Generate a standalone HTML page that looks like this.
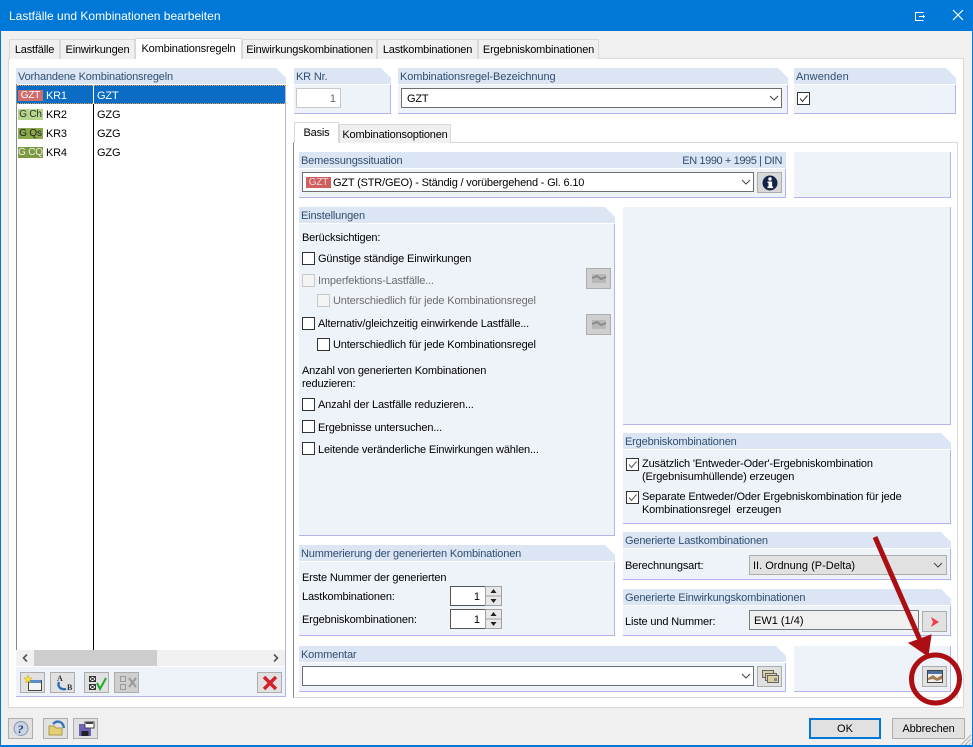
<!DOCTYPE html>
<html><head><meta charset="utf-8"><style>
*{box-sizing:border-box}
html,body{margin:0;padding:0;width:973px;height:747px;overflow:hidden;background:#f0f0f0;font-family:"Liberation Sans",sans-serif;font-size:11px;color:#000}
.a{position:absolute}
.t{position:absolute;white-space:nowrap;line-height:14px;height:14px;letter-spacing:-.15px;margin-top:1px}
.tab{position:absolute;background:#f0f0f0;border:1px solid #d9d9d9;border-bottom:none;text-align:center;white-space:nowrap;line-height:21px;letter-spacing:-.18px}
.tab.on{background:#fff;line-height:20px}
.p{position:absolute;background:#eef2f9;border-right:1px solid #b3b3ee;border-bottom:1px solid #b3b3ee}
.c{clip-path:polygon(0 0,calc(100% - 10px) 0,100% 10px,100% 100%,0 100%)}
.h{position:absolute;left:0;right:-1px;top:0;height:17px;background:#dbe5f4;border-bottom:1px solid #fff;color:#2f4f70;line-height:16px;padding:1px 0 0 2px;white-space:nowrap;letter-spacing:-.16px}
.in{position:absolute;background:#fff;border:1px solid #6e6e6e;line-height:20px;white-space:nowrap;padding-left:5px;letter-spacing:-.18px}
.btn{position:absolute;background:#e1e1e1;border:1px solid #adadad}
.dis{background:#cfcfcf}
.cb{position:absolute;width:13px;height:13px;background:#fff;border:1px solid #333}
.cb.d{border-color:#c8c8c8;background:#f4f4f4}
.gray{color:#6d6d6d}
.tag{position:absolute;height:11px;line-height:11px;text-align:center;white-space:nowrap;font-size:10px;letter-spacing:-.2px}
svg{position:absolute;overflow:visible}
</style></head><body>

<div class="a" style="left:0;top:0;width:973px;height:747px;border:1px solid #0078d7;border-bottom-width:2px"></div>
<div class="a" style="left:0;top:0;width:973px;height:31px;background:#0078d7"></div>
<div class="t" style="left:9px;top:8px;color:#fff;font-size:12px;letter-spacing:0">Lastfälle und Kombinationen bearbeiten</div>
<svg style="left:914px;top:9px" width="50" height="14" fill="none" stroke="#fff"><path d="M9.5 3.5H1.500V11.500H9.500M5 7.500H11M9.500 6V9"/><path d="M39 1L49 11M49 1L39 11" stroke-width="1.2"/></svg>

<!-- main tab panel -->
<div class="a" style="left:8px;top:58px;width:956px;height:650px;background:#fff;border:1px solid #d9d9d9"></div>
<div class="tab" style="left:9px;top:39px;width:51px;height:20px">Lastfälle</div>
<div class="tab" style="left:60px;top:39px;width:75px;height:20px">Einwirkungen</div>
<div class="tab on" style="left:135px;top:38px;width:107px;height:21px;z-index:2">Kombinationsregeln</div>
<div class="tab" style="left:242px;top:39px;width:135px;height:20px">Einwirkungskombinationen</div>
<div class="tab" style="left:377px;top:39px;width:101px;height:20px">Lastkombinationen</div>
<div class="tab" style="left:478px;top:39px;width:121px;height:20px">Ergebniskombinationen</div>

<!-- left list panel -->
<div class="p c" style="left:16px;top:68px;width:270px;height:629px">
  <div class="h">Vorhandene Kombinationsregeln</div>
</div>
<div class="a" style="left:16px;top:84px;width:269px;height:566px;background:#fff;border-left:1px solid #8a8a8a"></div>
<div class="a" style="left:17px;top:85px;width:268px;height:19px;background:#0a6cc4;border-top:1px dotted #e0a050;border-bottom:1px dotted #e0a050"></div>
<div class="a" style="left:93px;top:85px;width:1px;height:565px;background:#000"></div>
<div class="a" style="left:93px;top:85px;width:1px;height:19px;background:#fff"></div>
<div class="tag" style="left:18px;top:90px;width:25px;background:#cf6c6c;color:#fff">GZT</div>
<div class="tag" style="left:18px;top:109px;width:25px;background:#b5d48c;color:#333">G Ch</div>
<div class="tag" style="left:18px;top:128px;width:25px;background:#8aa84c;color:#222">G Qs</div>
<div class="tag" style="left:18px;top:147px;width:25px;background:#7c9a40;color:#eee">G CQ</div>
<div class="t" style="left:46px;top:88px;color:#fff;word-spacing:-3px">KR 1</div>
<div class="t" style="left:46px;top:107px;word-spacing:-3px">KR 2</div>
<div class="t" style="left:46px;top:126px;word-spacing:-3px">KR 3</div>
<div class="t" style="left:46px;top:145px;word-spacing:-3px">KR 4</div>
<div class="t" style="left:97px;top:88px;color:#fff">GZT</div>
<div class="t" style="left:97px;top:107px">GZG</div>
<div class="t" style="left:97px;top:126px">GZG</div>
<div class="t" style="left:97px;top:145px">GZG</div>
<!-- scrollbar -->
<div class="a" style="left:17px;top:650px;width:268px;height:16px;background:#f0f0f0"></div>
<div class="a" style="left:34px;top:650px;width:123px;height:16px;background:#cdcdcd"></div>
<svg style="left:17px;top:650px" width="268" height="16" fill="none" stroke="#555" stroke-width="1.6"><path d="M10 4.500L6.500 8L10 11.500M257 4.500L260.500 8L257 11.500"/></svg>
<div class="a" style="left:17px;top:666px;width:268px;height:1px;background:#fff"></div>
<!-- toolbar -->
<div class="btn" style="left:20px;top:672px;width:25px;height:21px"><svg style="left:3px;top:2px" width="18" height="16"><rect x="4.500" y="5.500" width="13" height="10" fill="#f4f4f4" stroke="#444"/><rect x="5" y="5" width="12" height="3" fill="#5a8ccc"/><path d="M4 0L5 3L8 3L5.600 5L6.500 8L4 6L1.500 8L2.400 5L0 3L3 3Z" fill="#ffe23a" stroke="#c9a400" stroke-width=".5"/></svg></div>
<div class="btn" style="left:50px;top:672px;width:25px;height:21px"><svg style="left:3px;top:1px" width="20" height="18"><text x="3" y="7" font-size="8" font-weight="bold" font-family="Liberation Serif" fill="#333">A</text><text x="13" y="16" font-size="8" font-weight="bold" font-family="Liberation Serif" fill="#333">B</text><path d="M5 8C3 13 7 16 12 15" fill="none" stroke="#2d6fb5" stroke-width="2.400"/></svg></div>
<div class="btn" style="left:84px;top:672px;width:25px;height:21px"><svg style="left:3px;top:2px" width="20" height="16"><rect x="1.500" y="1.500" width="6" height="5" fill="#fff" stroke="#333"/><rect x="1.500" y="9.500" width="6" height="5" fill="#fff" stroke="#333"/><path d="M2 2L7 6M7 2L2 6M2 10L7 14M7 10L2 14" stroke="#333"/><path d="M9 8L12 14L18 3" fill="none" stroke="#1faa2c" stroke-width="2"/></svg></div>
<div class="btn dis" style="left:114px;top:672px;width:25px;height:21px"><svg style="left:3px;top:2px" width="20" height="16" fill="none" stroke="#999"><rect x="2.500" y="1.500" width="5" height="5"/><rect x="2.500" y="9.500" width="5" height="5"/><path d="M11 3L18 12M18 3L11 12" stroke-width="2"/></svg></div>
<div class="btn" style="left:257px;top:672px;width:25px;height:21px"><svg style="left:4px;top:2px" width="16" height="16"><path d="M2 2L14 14M14 2L2 14" stroke="#d4202a" stroke-width="3.400"/></svg></div>

<!-- KR Nr -->
<div class="p c" style="left:294px;top:68px;width:97px;height:46px"><div class="h">KR Nr.</div></div>
<div class="a" style="left:296px;top:88px;width:45px;height:20px;background:#fff;border:1px solid #c8c8c8;text-align:right;line-height:20px;padding-right:4px;color:#666">1</div>

<div class="p c" style="left:398px;top:68px;width:390px;height:46px"><div class="h" style="letter-spacing:-.1px">Kombinationsregel-Bezeichnung</div></div>
<div class="in" style="left:401px;top:88px;width:381px;height:20px">GZT</div>
<svg style="left:769px;top:95px" width="10" height="6" fill="none" stroke="#444"><path d="M1 1L5 5L9 1"/></svg>

<div class="p c" style="left:794px;top:68px;width:162px;height:46px"><div class="h" style="letter-spacing:.1px">Anwenden</div></div>
<div class="cb" style="left:797px;top:92px"></div>
<svg style="left:797px;top:92px" width="13" height="13" fill="none" stroke="#333"><path d="M3 6.500L5.500 9.500L10.500 3.500"/></svg>

<!-- inner tabs -->
<div class="a" style="left:293px;top:142px;width:665px;height:556px;background:#fff;border:1px solid #d9d9d9;border-left-color:#8a8a8a"></div>
<div class="tab" style="left:339px;top:124px;width:112px;height:19px;line-height:20px">Kombinationsoptionen</div>
<div class="tab on" style="left:294px;top:122px;width:45px;height:21px;z-index:2">Basis</div>

<!-- Bemessung -->
<div class="p" style="left:299px;top:152px;width:487px;height:46px"><div class="h">Bemessungssituation</div><div class="t" style="right:3px;top:1px;color:#2f4f70;letter-spacing:-.4px">EN 1990 + 1995 | DIN</div></div>
<div class="in" style="left:302px;top:172px;width:452px;height:20px;padding-left:30px">GZT (STR/GEO) - Ständig / vorübergehend - Gl. 6.10</div>
<div class="tag" style="left:306px;top:177px;width:25px;background:#cf5f5f;color:#f2d8d8">GZT</div>
<svg style="left:741px;top:179px" width="10" height="6" fill="none" stroke="#444"><path d="M1 1L5 5L9 1"/></svg>
<div class="btn" style="left:757px;top:172px;width:25px;height:21px;background:#d8d8d8"><svg style="left:4px;top:2px" width="16" height="16"><circle cx="8" cy="8" r="7.500" fill="#142448"/><rect x="6.500" y="6.500" width="3.600" height="6" fill="#fff"/><rect x="5.500" y="11.500" width="5.600" height="1.600" fill="#fff"/><rect x="5.500" y="6.500" width="3" height="1.400" fill="#fff"/><circle cx="8" cy="4" r="1.700" fill="#fff"/></svg></div>
<div class="p" style="left:794px;top:152px;width:157px;height:46px"></div>

<!-- Einstellungen -->
<div class="p c" style="left:299px;top:207px;width:316px;height:329px"><div class="h">Einstellungen</div></div>
<div class="t" style="left:302px;top:230px">Berücksichtigen:</div>
<div class="cb" style="left:302px;top:252px"></div><div class="t" style="left:318px;top:251px">Günstige ständige Einwirkungen</div>
<div class="cb d" style="left:302px;top:274px"></div><div class="t gray" style="left:318px;top:273px">Imperfektions-Lastfälle...</div>
<div class="cb d" style="left:317px;top:294px"></div><div class="t gray" style="left:333px;top:293px">Unterschiedlich für jede Kombinationsregel</div>
<div class="cb" style="left:302px;top:317px"></div><div class="t" style="left:318px;top:316px">Alternativ/gleichzeitig einwirkende Lastfälle...</div>
<div class="cb" style="left:317px;top:338px"></div><div class="t" style="left:333px;top:337px">Unterschiedlich für jede Kombinationsregel</div>
<div class="t" style="left:302px;top:363px">Anzahl von generierten Kombinationen</div>
<div class="t" style="left:302px;top:376px">reduzieren:</div>
<div class="cb" style="left:302px;top:398px"></div><div class="t" style="left:318px;top:397px">Anzahl der Lastfälle reduzieren...</div>
<div class="cb" style="left:302px;top:420px"></div><div class="t" style="left:318px;top:420px">Ergebnisse untersuchen...</div>
<div class="cb" style="left:302px;top:442px"></div><div class="t" style="left:318px;top:442px">Leitende veränderliche Einwirkungen wählen...</div>
<div class="btn dis" style="left:586px;top:268px;width:25px;height:21px"><svg style="left:4px;top:4px" width="16" height="12"><rect x="1" y="1" width="14" height="9" fill="#b8b8b8"/><path d="M1 5L6 3L10 6L15 4" fill="none" stroke="#888" stroke-width="2"/></svg></div>
<div class="btn dis" style="left:586px;top:314px;width:25px;height:21px"><svg style="left:4px;top:4px" width="16" height="12"><rect x="1" y="1" width="14" height="9" fill="#b8b8b8"/><path d="M1 5L6 3L10 6L15 4" fill="none" stroke="#888" stroke-width="2"/></svg></div>

<div class="p" style="left:623px;top:207px;width:328px;height:218px"></div>

<!-- Ergebnis -->
<div class="p c" style="left:623px;top:433px;width:328px;height:91px"><div class="h">Ergebniskombinationen</div></div>
<div class="cb" style="left:626px;top:458px"></div><svg style="left:626px;top:458px" width="13" height="13" fill="none" stroke="#555"><path d="M3 6.500L5.500 9.500L10.500 3.500"/></svg>
<div class="t" style="left:642px;top:456px">Zusätzlich 'Entweder-Oder'-Ergebniskombination</div>
<div class="t" style="left:642px;top:469px">(Ergebnisumhüllende) erzeugen</div>
<div class="cb" style="left:626px;top:491px"></div><svg style="left:626px;top:491px" width="13" height="13" fill="none" stroke="#555"><path d="M3 6.500L5.500 9.500L10.500 3.500"/></svg>
<div class="t" style="left:642px;top:489px">Separate Entweder/Oder Ergebniskombination für jede</div>
<div class="t" style="left:642px;top:502px">Kombinationsregel&nbsp; erzeugen</div>

<div class="p c" style="left:623px;top:532px;width:328px;height:48px"><div class="h">Generierte Lastkombinationen</div></div>
<div class="t" style="left:625px;top:558px">Berechnungsart:</div>
<div class="a" style="left:749px;top:555px;width:198px;height:20px;background:#e1e1e1;border:1px solid #adadad;line-height:20px;padding-left:3px;white-space:nowrap">II. Ordnung (P-Delta)</div>
<svg style="left:933px;top:562px" width="10" height="6" fill="none" stroke="#444"><path d="M1 1L5 5L9 1"/></svg>

<div class="p c" style="left:623px;top:589px;width:328px;height:47px"><div class="h">Generierte Einwirkungskombinationen</div></div>
<div class="t" style="left:625px;top:614px">Liste und Nummer:</div>
<div class="a" style="left:749px;top:610px;width:170px;height:20px;background:#f0f0f0;border:1px solid #7a7a7a;line-height:20px;padding-left:4px;white-space:nowrap">EW1 (1/4)</div>
<div class="btn" style="left:922px;top:611px;width:25px;height:21px"><svg style="left:7px;top:4px" width="10" height="12"><path d="M1 1L9 6L1 11L3 6Z" fill="#ee3c4c"/></svg></div>

<!-- Nummerierung -->
<div class="p c" style="left:299px;top:545px;width:316px;height:91px"><div class="h">Nummerierung der generierten Kombinationen</div></div>
<div class="t" style="left:302px;top:570px">Erste Nummer der generierten</div>
<div class="t" style="left:302px;top:589px">Lastkombinationen:</div>
<div class="t" style="left:302px;top:612px">Ergebniskombinationen:</div>
<div class="a" style="left:450px;top:586px;width:52px;height:20px;background:#fff;border:1px solid #555;line-height:20px;text-align:right;padding-right:21px">1</div>
<div class="a" style="left:450px;top:609px;width:52px;height:20px;background:#fff;border:1px solid #555;line-height:20px;text-align:right;padding-right:21px">1</div>
<svg style="left:485px;top:586px" width="18" height="43"><g fill="#e8e8e8" stroke="#a0a0a0"><rect x=".5" y=".5" width="16" height="9.500"/><rect x=".5" y="10" width="16" height="9.500"/><rect x=".5" y="23.500" width="16" height="9.500"/><rect x=".5" y="33" width="16" height="9.500"/></g><path d="M8.500 3L11.500 7H5.500ZM8.500 17L11.500 13H5.500ZM8.500 26L11.500 30H5.500ZM8.500 40L11.500 36H5.500Z" fill="#222"/></svg>

<!-- Kommentar -->
<div class="p c" style="left:299px;top:646px;width:487px;height:46px"><div class="h">Kommentar</div></div>
<div class="in" style="left:302px;top:666px;width:452px;height:20px"></div>
<svg style="left:741px;top:673px" width="10" height="6" fill="none" stroke="#444"><path d="M1 1L5 5L9 1"/></svg>
<div class="btn" style="left:757px;top:666px;width:25px;height:21px"><svg style="left:4px;top:3px" width="18" height="14" stroke="#666" fill="#d9cfa2"><rect x=".5" y=".5" width="11" height="7"/><rect x="3.500" y="3.500" width="11" height="7"/><rect x="5.500" y="5.500" width="11" height="7"/><rect x="12" y="8" width="3" height="3" fill="#888" stroke="none"/></svg></div>

<div class="p" style="left:794px;top:646px;width:157px;height:46px"></div>
<div class="btn" style="left:922px;top:666px;width:25px;height:21px"><svg style="left:4px;top:3px" width="17" height="14"><rect x=".5" y=".5" width="15" height="12" fill="#eee" stroke="#444"/><rect x="1" y="1" width="14" height="3" fill="#4c6fa5"/><path d="M1 8L6 5L10 8L15 5V9L10 11L6 9L1 10Z" fill="#a67c52"/></svg></div>

<!-- bottom buttons -->
<div class="btn" style="left:8px;top:718px;width:25px;height:21px"><svg style="left:4px;top:2px" width="16" height="16"><circle cx="8" cy="7.500" r="7" fill="#c9d3e6" stroke="#8a96ad"/><path d="M2 15L5 11L7 13Z" fill="#c9d3e6"/><text x="4.500" y="12" font-size="12" font-weight="bold" font-style="italic" font-family="Liberation Serif" fill="#263a75">?</text></svg></div>
<div class="btn" style="left:43px;top:718px;width:25px;height:21px"><svg style="left:4px;top:2px" width="18" height="16"><path d="M5 3C9 -1 15 0 16 7" fill="none" stroke="#3b74b5" stroke-width="2.400"/><path d="M1 5H6L8 7H14V14H1Z" fill="#e4cf72" stroke="#a99a50"/></svg></div>
<div class="btn" style="left:73px;top:718px;width:25px;height:21px"><svg style="left:4px;top:2px" width="17" height="16"><rect x="1" y="3" width="12" height="12" fill="#6a63b8"/><rect x="3.500" y="10" width="7" height="5" fill="#222"/><rect x="7" y="1" width="9" height="6" fill="#fff" stroke="#444"/><rect x="8" y="1.500" width="7" height="1.500" fill="#444"/></svg></div>

<div class="a" style="left:809px;top:718px;width:72px;height:21px;background:#e1e1e1;border:2px solid #0078d7;text-align:center;line-height:19px">OK</div>
<div class="a" style="left:892px;top:718px;width:73px;height:21px;background:#e1e1e1;border:1px solid #adadad;text-align:center;line-height:21px;letter-spacing:-.1px">Abbrechen</div>
<svg style="left:960px;top:734px" width="12" height="12" stroke="#b0b0b0"><path d="M11 1L1 11M11 5L5 11M11 9L9 11"/></svg>

<!-- annotation -->
<svg style="left:0;top:0;z-index:5" width="973" height="747" fill="none">
<path d="M875 537L920 640" stroke="#ab0f14" stroke-width="5"/>
<path d="M928 656L909 643L931 635Z" fill="#ab0f14" stroke="#ab0f14"/>
<circle cx="935.500" cy="679" r="24" stroke="#ab0f14" stroke-width="5"/>
</svg>
</body></html>
